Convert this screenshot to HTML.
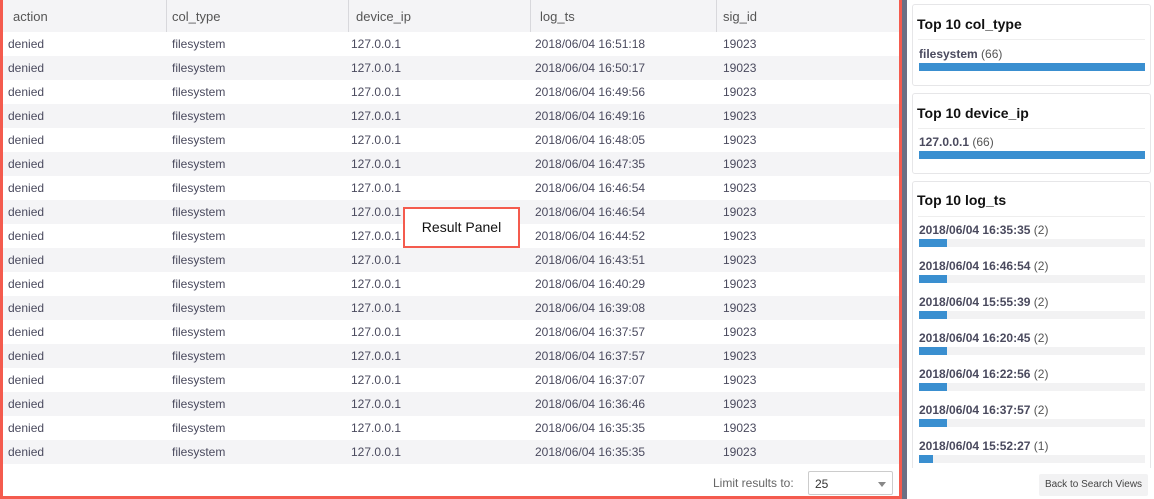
<!DOCTYPE html>
<html><head><style>
*{margin:0;padding:0;box-sizing:border-box}
body{width:1154px;height:499px;overflow:hidden;background:#fff;font-family:"Liberation Sans",sans-serif;color:#4a4a5a;position:relative}
.left{position:absolute;left:0;top:0;width:902px;height:499px;border:3px solid #f45b4e;border-top:none;background:#fff;overflow:hidden}
.sep{position:absolute;left:902px;top:0;width:5px;height:499px;background:#6b6f84}
.hdr{position:absolute;left:0;top:0;width:896px;height:32px;background:#f4f4f6}
.hdr span{position:absolute;top:9px;font-size:13px;color:#555}
.hdr i{position:absolute;top:0;width:1px;height:32px;background:#d8d8dc}
.row{position:absolute;left:0;width:896px;height:24px;font-size:12px;color:#4a4a5e}
.row span{position:absolute;top:5px}
.rp{position:absolute;left:400px;top:207px;width:117px;height:41px;border:2px solid #f45b4e;background:#fff;font-size:14px;color:#111;text-align:center;line-height:37px}
.lim{position:absolute;left:713px;top:476px;font-size:12px;color:#666}
.sel{position:absolute;left:808px;top:471px;width:85px;height:24px;border:1px solid #ccc;border-radius:2px;font-size:12px;padding:5px 6px;color:#333}
.sel:after{content:"";position:absolute;right:6px;top:10px;border:4px solid transparent;border-top:5px solid #888}
.card{position:absolute;left:912px;width:239px;background:#fff;border:1px solid #e6e6e8;border-radius:3px}
.card h3{position:absolute;left:4px;top:11px;font-size:14px;font-weight:bold;color:#111}
.card .ln{position:absolute;left:5px;right:5px;top:34px;height:1px;background:#eee}
.it{position:absolute;left:919px;width:226px;font-size:12px;color:#555}
.it b{color:#4a4a5e}
.tr{position:absolute;left:919px;width:226px;height:8px;background:#f2f2f3}
.tr div{height:8px;background:#3a8fd0}
.btn{position:absolute;left:1039px;top:474px;width:109px;height:22px;background:#f2f2f3;border-radius:2px;font-size:10px;color:#444;text-align:center;line-height:22px}
</style></head><body>
<div class="left">
<div class="hdr">
<span style="left:10px">action</span><i style="left:163px"></i>
<span style="left:169px">col_type</span><i style="left:345px"></i>
<span style="left:353px">device_ip</span><i style="left:527px"></i>
<span style="left:537px">log_ts</span><i style="left:713px"></i>
<span style="left:720px">sig_id</span>
</div>
<div id="rows"></div>
<div class="rp">Result Panel</div>
</div>
<div class="sep"></div>
<div class="lim">Limit results to:</div>
<div class="sel">25</div>
<div class="card" style="top:4px;height:82px"><h3>Top 10 col_type</h3><div class="ln"></div></div>
<div class="it" style="top:47px"><b>filesystem</b> (66)</div>
<div class="tr" style="top:63px"><div style="width:226px"></div></div>
<div class="card" style="top:93px;height:81px"><h3>Top 10 device_ip</h3><div class="ln"></div></div>
<div class="it" style="top:135px"><b>127.0.0.1</b> (66)</div>
<div class="tr" style="top:151px"><div style="width:226px"></div></div>
<div class="card" style="top:181px;height:295px;border-bottom:none"><h3 style="top:10px">Top 10 log_ts</h3><div class="ln"></div></div>
<div id="ts"></div>
<div style="position:absolute;left:908px;top:468px;width:246px;height:31px;background:#fff"></div>
<div class="btn">Back to Search Views</div>
<script>
var t=["16:51:18","16:50:17","16:49:56","16:49:16","16:48:05","16:47:35","16:46:54","16:46:54","16:44:52","16:43:51","16:40:29","16:39:08","16:37:57","16:37:57","16:37:07","16:36:46","16:35:35","16:35:35"];
var h="";
for(var i=0;i<18;i++){h+='<div class="row" style="top:'+(32+i*24)+'px;'+(i%2?'background:#f4f4f6':'background:#fff')+'"><span style="left:5px">denied</span><span style="left:169px">filesystem</span><span style="left:348px">127.0.0.1</span><span style="left:532px">2018/06/04 '+t[i]+'</span><span style="left:720px">19023</span></div>';}
document.getElementById("rows").innerHTML=h;
var s=[["16:35:35",2],["16:46:54",2],["15:55:39",2],["16:20:45",2],["16:22:56",2],["16:37:57",2],["15:52:27",1]];
h="";
for(var j=0;j<7;j++){var y=223+j*36;h+='<div class="it" style="top:'+y+'px"><b>2018/06/04 '+s[j][0]+'</b> ('+s[j][1]+')</div><div class="tr" style="top:'+(y+16)+'px"><div style="width:'+(s[j][1]*14)+'px"></div></div>';}
document.getElementById("ts").innerHTML=h;
</script>
</body></html>
